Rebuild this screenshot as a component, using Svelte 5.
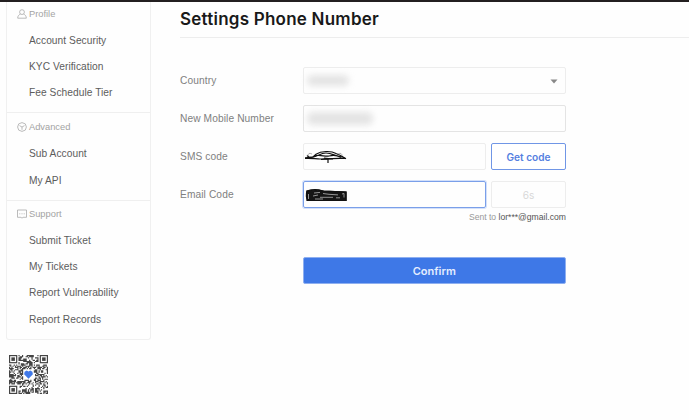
<script lang="ts">
	interface Section {
		title: string;
		icon: 'profile' | 'advanced' | 'support';
		items: string[];
	}

	const sections: Section[] = [
		{
			title: 'Profile',
			icon: 'profile',
			items: ['Account Security', 'KYC Verification', 'Fee Schedule Tier']
		},
		{ title: 'Advanced', icon: 'advanced', items: ['Sub Account', 'My API'] },
		{
			title: 'Support',
			icon: 'support',
			items: ['Submit Ticket', 'My Tickets', 'Report Vulnerability', 'Report Records']
		}
	];

	let seconds = $state(6);

	const QR_SIZE = 33;

	// Finder squares in three corners, free space around the logo, noise elsewhere
	function isFinderZone(x: number, y: number) {
		return (x < 8 && y < 8) || (x > QR_SIZE - 9 && y < 8) || (x < 8 && y > QR_SIZE - 9);
	}

	function buildModules() {
		let path = '';
		let seed = 77;
		for (let y = 0; y < QR_SIZE; y++) {
			for (let x = 0; x < QR_SIZE; x++) {
				seed = (seed * 1103515245 + 12345) % 2147483648;
				const inLogo = Math.abs(x - 16) < 5 && Math.abs(y - 16) < 5;
				if (!isFinderZone(x, y) && !inLogo && seed / 2147483648 < 0.53) {
					path += `M${x} ${y}h1v1h-1z`;
				}
			}
		}
		return path;
	}

	const modules = buildModules();
	const finders = [
		[0, 0],
		[QR_SIZE - 7, 0],
		[0, QR_SIZE - 7]
	];
</script>

<div class="topbar"></div>
<div class="page">
	<aside>
		<nav>
			{#each sections as section (section.title)}
				<section>
					<h2>
						<svg class="icon" viewBox="0 0 10 10">
							{#if section.icon === 'profile'}
								<circle cx="5" cy="3.1" r="2.4" />
								<path d="M3.4 5.2C1.6 5.8.8 7 .7 9.2h8.6C9.2 7 8.4 5.8 6.6 5.2" />
							{:else if section.icon === 'advanced'}
								<path d="M5 .6 8.3 1.9 9.4 5 8.3 8.1 5 9.4 1.7 8.1.6 5 1.7 1.9z" />
								<path d="M2.5 3.6 5 5l2.5-1.4M5 5v2.8" />
							{:else}
								<path d="M.5 1h9v7.3H6L5 9.2l-1-.9H.5z" />
								<path d="M2.3 4.8h1M4.5 4.8h1M6.7 4.8h1" />
							{/if}
						</svg>
						{section.title}
					</h2>
					<ul>
						{#each section.items as item (item)}
							<li>{item}</li>
						{/each}
					</ul>
				</section>
			{/each}
		</nav>

		<svg class="qr" viewBox="0 0 33 33">
			<path d={modules} />
			{#each finders as [x, y]}
				<rect class="ring" x={x + 0.5} y={y + 0.5} width="6" height="6" />
				<rect x={x + 2} y={y + 2} width="3" height="3" />
			{/each}
			<path class="logo" d="M13.2 14.2 15 13.2l1.5.7 1.5-.7 1.8 1 .4 2-3.7 3.8-3.7-3.8z" />
		</svg>
	</aside>

	<main>
		<h1>Settings Phone Number</h1>

		<form onsubmit={(e) => e.preventDefault()}>
			<div class="row">
				<span class="label">Country</span>
				<div class="field">
					<span class="smudge"></span>
					<svg class="caret" viewBox="0 0 8 5"><path d="M.5.5h7L4 4.5z" /></svg>
				</div>
			</div>

			<div class="row">
				<span class="label">New Mobile Number</span>
				<div class="field strong">
					<span class="smudge wide"></span>
				</div>
			</div>

			<div class="row">
				<span class="label">SMS code</span>
				<div class="field">
					<svg class="scribble" viewBox="0 0 44 16">
						<path d="M1 9.5C6 9 12 10 16 10s14-1 26-.5M1 8.8l8-.8 3-2.8C17 2 27 1.5 32 4.5c4 1.5 7 3 10 5.2" />
						<path d="M5 8c7 2 10-4 17-4s9 4 17 4M10 7c6-2 11 1 15 0s8-1 12 1.5M3 6.5l3 2.5M17 10.500l7-.5v4M20 9l9 1" />
						<path class="thin" d="M4 7q0-4 4-2M34 5q4-2 4 2" />
					</svg>
				</div>
				<button type="button" class="side">Get code</button>
			</div>

			<div class="row">
				<span class="label">Email Code</span>
				<div class="field focused">
					<svg class="scribble" viewBox="0 0 44 16">
						<path class="fill" d="M3 4 12 3l8 1.2L42 5v8.5H3z" />
						<path d="M3 4C9 2 16 3 19 4l23 1v8.5L4 13.5C2 12 2 7 3 4z" />
						<path class="gap" d="M4.5 7v5M10 6l6-.6M19 6.5l6 .8 9 .6M9 9l5-1M16 10.3h13M11 12h8M38 7l2-.5v4M32 10.8h4" />
					</svg>
				</div>
				<button type="button" class="side" disabled>{seconds}s</button>
			</div>

			<p class="hint">Sent to <span>lor***@gmail.com</span></p>
			<button type="submit" class="confirm">Confirm</button>
		</form>
	</main>
</div>

<style>
	:global(body) {
		margin: 0;
		background: #fefefe;
	}

	.topbar {
		height: 2px;
		background: #231f20;
	}

	.page {
		display: flex;
		height: 418px;
		overflow: hidden;
		font-family: 'Liberation Sans', Arial, sans-serif;
	}

	aside {
		width: 145px;
		margin-left: 6px;
		flex-shrink: 0;
	}

	nav {
		border: 1px solid #f0f0f0;
		border-top: none;
		border-radius: 0 0 3px 3px;
	}

	section {
		padding-bottom: 7px;
	}

	section:last-child {
		padding-bottom: 6px;
	}

	section + section {
		border-top: 1px solid #efefef;
	}

	h2 {
		display: flex;
		align-items: center;
		gap: 2px;
		height: 27px;
		margin: 0;
		padding-left: 10px;
		color: #a3a3a3;
		font-size: 9.3px;
		font-weight: 400;
	}

	section:first-child h2 {
		height: 24.5px;
	}

	.icon {
		width: 10px;
		height: 10px;
		fill: none;
		stroke: #aaa;
		stroke-width: 0.8;
	}

	ul {
		margin: 0;
		padding: 0 0 0 22px;
		list-style: none;
	}

	li {
		height: 26.25px;
		color: #5c5c5c;
		font-size: 10.2px;
		line-height: 27px;
		letter-spacing: 0.05px;
		white-space: nowrap;
	}

	section:last-child li {
		line-height: 26.25px;
	}

	.qr {
		display: block;
		width: 39px;
		height: 39px;
		margin: 15px 0 0 3px;
		fill: #444;
	}

	.qr .ring {
		fill: none;
		stroke: #444;
	}

	.qr .logo {
		fill: #3f78e8;
	}

	main {
		flex: 1;
		margin-left: 29px;
	}

	h1 {
		height: 35px;
		margin: 0;
		border-bottom: 1px solid #ededed;
		color: #191919;
		font-family: Inter, sans-serif;
		font-size: 17px;
		font-weight: 600;
		line-height: 35px;
		letter-spacing: 0.23px;
	}

	form {
		width: 386px;
		padding-top: 29px;
	}

	.row {
		display: flex;
		height: 27px;
		margin-bottom: 11px;
	}

	.label {
		width: 122.5px;
		color: #808080;
		font-size: 10.2px;
		line-height: 27px;
		letter-spacing: 0.1px;
	}

	.field {
		box-sizing: border-box;
		display: flex;
		flex: 1;
		align-items: center;
		border: 1px solid #ededed;
		border-radius: 2px;
	}

	.field.strong {
		border-color: #e4e4e4;
	}

	.field.focused {
		border-color: #7a9fe9;
		box-shadow: 0 0 0 1px #d3e0fa;
	}

	.smudge {
		width: 42px;
		height: 11px;
		margin-left: 3px;
		border-radius: 6px;
		background: #e4e4e4;
		filter: blur(3px);
	}

	.smudge.wide {
		width: 66px;
		height: 13px;
	}

	.caret {
		width: 8px;
		height: 5px;
		margin: 2px 7px 0 auto;
		fill: #888;
	}

	.scribble {
		width: 44px;
		height: 16px;
		fill: none;
		stroke: #111;
		stroke-width: 1.2;
	}

	.scribble .fill {
		fill: #161616;
	}

	.scribble .gap {
		stroke: #ccc;
		stroke-width: 0.7;
	}

	.scribble .thin {
		stroke: #888;
		stroke-width: 0.7;
	}

	button {
		padding: 0;
		border-radius: 2px;
		font-family: Inter, sans-serif;
	}

	.side {
		width: 75px;
		margin-left: 5.5px;
		border: 1px solid #7096e6;
		background: #fff;
		color: #5480df;
		font-size: 10.1px;
		font-weight: 600;
	}

	.side:disabled {
		border-color: #ededed;
		background: #fefefe;
		color: #d8d8d8;
		font-weight: 400;
	}

	.hint {
		margin: -8px 0 0;
		color: #999;
		font-size: 8.6px;
		line-height: 12px;
		text-align: right;
	}

	.hint span {
		color: #555;
	}

	.confirm {
		display: block;
		width: 263.5px;
		height: 27px;
		margin: 34px 0 0 auto;
		border: 1px solid #8eaff0;
		background: #3e78e7;
		color: #e4edff;
		font-size: 11px;
		font-weight: 600;
	}
</style>
